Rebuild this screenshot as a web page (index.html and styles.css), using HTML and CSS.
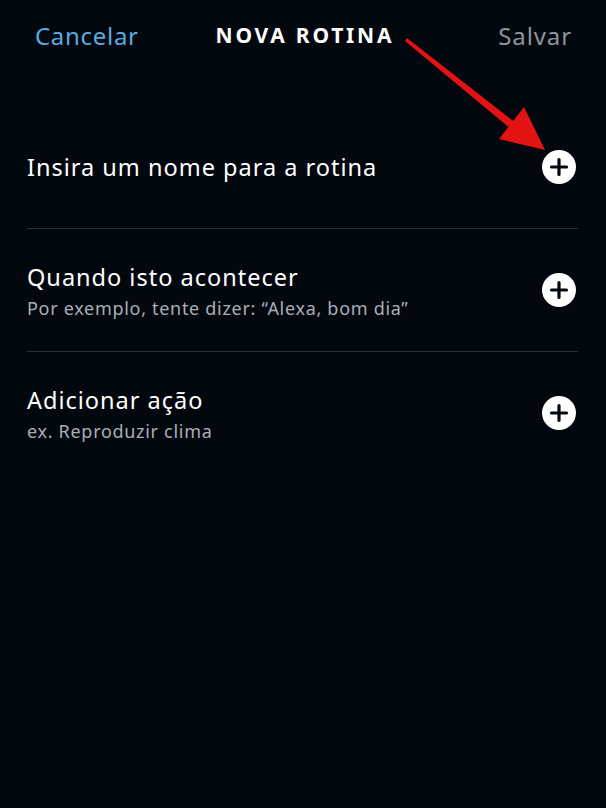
FILE: index.html
```html
<html>
	<head>
		<title>Nova Rotina</title>
		<link rel="stylesheet" href="styles.css">
	</head>
	<body>
		<div class="screen">
			<div class="topbar">
				<span class="cancel">Cancelar</span>
				<span class="heading">NOVA ROTINA</span>
				<span class="save">Salvar</span>
			</div>
			<div class="list">
				<div class="row">
					<div class="texts">
						<div class="title">Insira um nome para a rotina</div>
					</div>
					<span class="plus"><svg width="34" height="34" viewBox="0 0 34 34"><circle cx="17" cy="17" r="17" fill="#fff"/><path d="M17 9.5v15M9.5 17h15" stroke="#03080f" stroke-width="3.2" stroke-linecap="round"/></svg></span>
				</div>
				<div class="row">
					<div class="texts">
						<div class="title">Quando isto acontecer</div>
						<div class="sub">Por exemplo, tente dizer: “Alexa, bom dia”</div>
					</div>
					<span class="plus"><svg width="34" height="34" viewBox="0 0 34 34"><circle cx="17" cy="17" r="17" fill="#fff"/><path d="M17 9.5v15M9.5 17h15" stroke="#03080f" stroke-width="3.2" stroke-linecap="round"/></svg></span>
				</div>
				<div class="row last">
					<div class="texts">
						<div class="title">Adicionar ação</div>
						<div class="sub">ex. Reproduzir clima</div>
					</div>
					<span class="plus"><svg width="34" height="34" viewBox="0 0 34 34"><circle cx="17" cy="17" r="17" fill="#fff"/><path d="M17 9.5v15M9.5 17h15" stroke="#03080f" stroke-width="3.2" stroke-linecap="round"/></svg></span>
				</div>
			</div>
			<!-- annotation arrow drawn over the screenshot -->
			<svg class="arrow" width="606" height="200" viewBox="0 0 606 200">
				<polygon points="405,41 407,38 517,124 512,130" fill="#e31313"/>
				<polygon points="499,139 524,107 545,150" fill="#e31313"/>
			</svg>
		</div>
	</body>
</html>
```

FILE: styles.css
```css
body {
	margin: 0;
	background: #03080f;
	font-family: "Noto Sans", "Open Sans", sans-serif;
}
.screen {
	position: relative;
	height: 808px;
}
.topbar {
	display: grid;
	grid-template-columns: 1fr auto 1fr;
	align-items: center;
	padding: 16px 34px 0 35px;
	height: 38px;
}
.cancel {
	color: #5ca9df;
	font-size: 24px;
	letter-spacing: 0.7px;
}
.heading {
	color: #fff;
	font-weight: bold;
	font-size: 21px;
	letter-spacing: 2.8px;
	margin-right: -2.8px;
}
.save {
	color: #8e949b;
	font-size: 24px;
	letter-spacing: 0.9px;
	justify-self: end;
}
.list {
	margin: 52px 28px 0 27px;
}
.row {
	display: flex;
	align-items: center;
	justify-content: space-between;
	height: 122px;
	border-bottom: 1px solid #2a3038;
}
.row.last {
	border-bottom: none;
}
.title {
	color: #fff;
	font-size: 23.5px;
	letter-spacing: 1px;
}
.sub {
	color: #a9aeb4;
	font-size: 18px;
	letter-spacing: 0.7px;
	margin-top: 3px;
}
.plus {
	display: flex;
	margin-right: 2px;
}
.arrow {
	position: absolute;
	left: 0;
	top: 0;
}
```
